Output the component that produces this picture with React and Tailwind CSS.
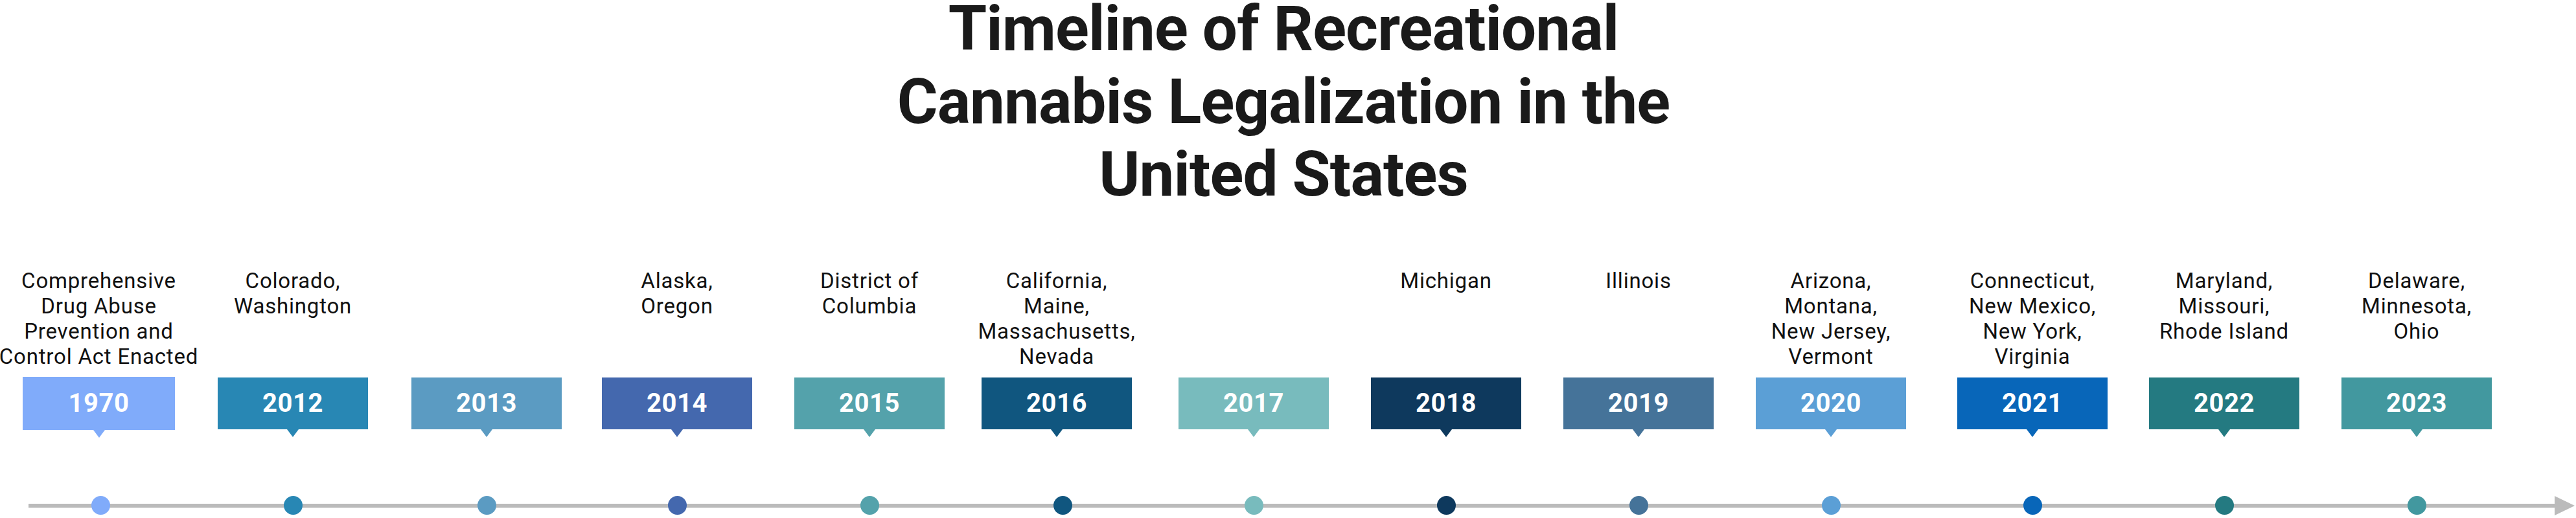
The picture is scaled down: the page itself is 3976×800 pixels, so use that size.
import React from "react";

const items = [
  { year: "1970", lines: ["Comprehensive", "Drug Abuse", "Prevention and", "Control Act Enacted"], color: "text-[#80abfa]", ml: "ml-[35px]", w: "w-[235px]", labelH: "h-[168px]", boxH: "h-[82px]", dotMt: "mt-[90px]", dotShift: "translate-x-[3px]" },
  { year: "2012", lines: ["Colorado,", "Washington"], color: "text-[#2887b4]", ml: "ml-[66px]" },
  { year: "2013", lines: [], color: "text-[#5b9bc2]", ml: "ml-[67px]" },
  { year: "2014", lines: ["Alaska,", "Oregon"], color: "text-[#4468ae]", ml: "ml-[62px]" },
  { year: "2015", lines: ["District of", "Columbia"], color: "text-[#54a2ab]", ml: "ml-[65px]" },
  { year: "2016", lines: ["California,", "Maine,", "Massachusetts,", "Nevada"], color: "text-[#10567f]", ml: "ml-[57px]", dotShift: "translate-x-[9px]" },
  { year: "2017", lines: [], color: "text-[#78bbbd]", ml: "ml-[72px]" },
  { year: "2018", lines: ["Michigan"], color: "text-[#0e395d]", ml: "ml-[65px]" },
  { year: "2019", lines: ["Illinois"], color: "text-[#457399]", ml: "ml-[65px]" },
  { year: "2020", lines: ["Arizona,", "Montana,", "New Jersey,", "Vermont"], color: "text-[#5b9fd6]", ml: "ml-[65px]" },
  { year: "2021", lines: ["Connecticut,", "New Mexico,", "New York,", "Virginia"], color: "text-[#0866b9]", ml: "ml-[79px]" },
  { year: "2022", lines: ["Maryland,", "Missouri,", "Rhode Island"], color: "text-[#247a81]", ml: "ml-[64px]" },
  { year: "2023", lines: ["Delaware,", "Minnesota,", "Ohio"], color: "text-[#42989f]", ml: "ml-[65px]" },
];

function Column({ item }) {
  const w = item.w || "w-[232px]";
  const labelH = item.labelH || "h-[169px]";
  const boxH = item.boxH || "h-[80px]";
  const dotMt = item.dotMt || "mt-[91px]";
  const dotShift = item.dotShift || "";
  return (
    <div className={`flex flex-col items-center shrink-0 ${w} ${item.ml} ${item.color}`}>
      <div className={`${labelH} flex flex-col items-center text-center whitespace-nowrap text-[33px] leading-[39px] tracking-[0.8px] text-[#111111]`}>
        {item.lines.map((l, i) => (
          <span key={i}>{l}</span>
        ))}
      </div>
      <div className={`${w} ${boxH} bg-current flex items-center justify-center`}>
        <span className="text-white text-[40px] font-bold tracking-[0.6px] leading-none">{item.year}</span>
      </div>
      <svg width="18" height="12" viewBox="0 0 18 12" className="block">
        <polygon points="0,0 18,0 9,12" fill="currentColor" />
      </svg>
      <div className={`relative ${dotMt} w-[29px] h-[29px] rounded-full bg-current ${dotShift}`} />
    </div>
  );
}

export default function App() {
  return (
    <div className="relative w-[3976px] h-[800px] overflow-hidden bg-white font-['Roboto',sans-serif]">
      <div className="absolute left-[44px] top-[778px] w-[3900px] h-[6px] bg-[#bbbbbb]" />
      <svg className="absolute left-[3943px] top-[766px]" width="31" height="30" viewBox="0 0 31 30">
        <polygon points="0,0 31,15 0,30" fill="#bbbbbb" />
      </svg>
      <div className="flex flex-col">
        <h1 className="-mt-[12px] pr-[14px] text-center text-[96px] font-bold leading-[112.5px] tracking-[-0.9px] text-[#1a1a1a]">
          Timeline of Recreational
          <br />
          Cannabis Legalization in the
          <br />
          United States
        </h1>
        <div className="mt-[88px] flex items-start">
          {items.map((it) => (
            <Column key={it.year} item={it} />
          ))}
        </div>
      </div>
    </div>
  );
}
